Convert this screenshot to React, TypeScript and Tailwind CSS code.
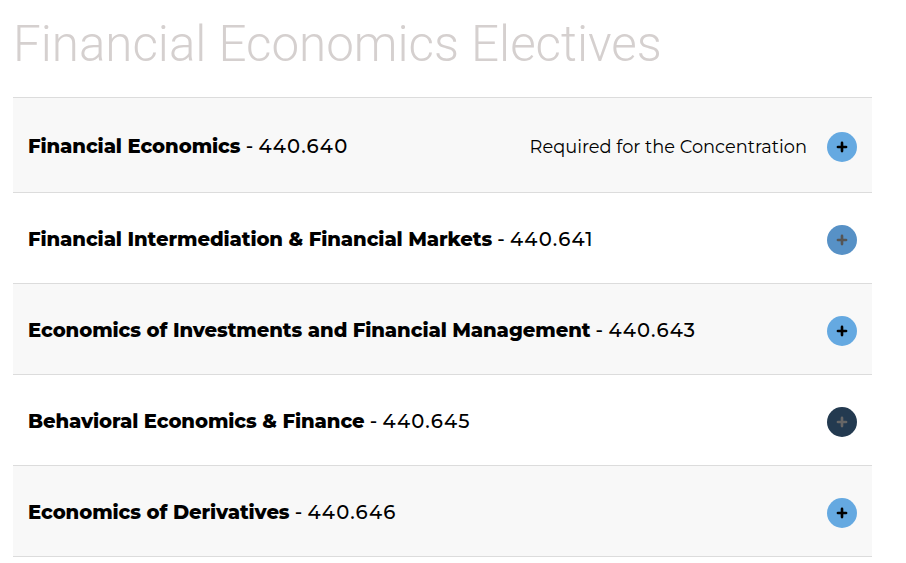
import { Plus } from "lucide-react";

const courses = [
  { id: 1, title: "Financial Economics", code: "440.640", note: "Required for the Concentration", icon: "bg-[#65a9e1]", plus: "text-black" },
  { id: 2, title: "Financial Intermediation & Financial Markets", code: "440.641", icon: "bg-[#5791c6]", plus: "text-[#555]" },
  { id: 3, title: "Economics of Investments and Financial Management", code: "440.643", icon: "bg-[#65a9e1]", plus: "text-black" },
  { id: 4, title: "Behavioral Economics & Finance", code: "440.645", icon: "bg-[#233a50]", plus: "text-[#666]" },
  { id: 5, title: "Economics of Derivatives", code: "440.646", icon: "bg-[#65a9e1]", plus: "text-black" },
];

export default function App() {
  return (
    <div className="min-h-[563px] bg-white px-[13px] pt-[14px]">
      <h1 className="mb-[23px] font-['Roboto',sans-serif] text-[49.3px] font-light leading-[60px] text-[#d5d0cf]">
        Financial Economics Electives
      </h1>
      <div className="w-[859px] border-t border-[#dcdcdc]">
        {courses.map((c, i) => (
          <div
            key={c.id}
            className={`flex items-center justify-between border-b border-[#dcdcdc] pl-[15px] pr-[15px] ${
              i === 0 ? "h-[95px] pt-[4px]" : "h-[91px] pt-[4px]"
            } ${i % 2 === 0 ? "bg-[#f8f8f8]" : "bg-white"}`}
          >
            <div className="font-['Montserrat',sans-serif] text-[19.6px] text-black">
              <span className="font-extrabold tracking-[-0.1px]">{c.title}</span>
              <span className="font-medium"> - </span>
              <span className="font-medium tracking-[1.2px]">{c.code}</span>
            </div>
            <div className="flex items-center gap-[20px]">
              {c.note && (
                <span className="font-['Montserrat',sans-serif] text-[17.8px] text-black">{c.note}</span>
              )}
              <span className={`flex h-[30px] w-[30px] items-center justify-center rounded-full ${c.icon}`}>
                <Plus className={`h-[14px] w-[14px] ${c.plus}`} strokeWidth={4.5} />
              </span>
            </div>
          </div>
        ))}
      </div>
    </div>
  );
}
